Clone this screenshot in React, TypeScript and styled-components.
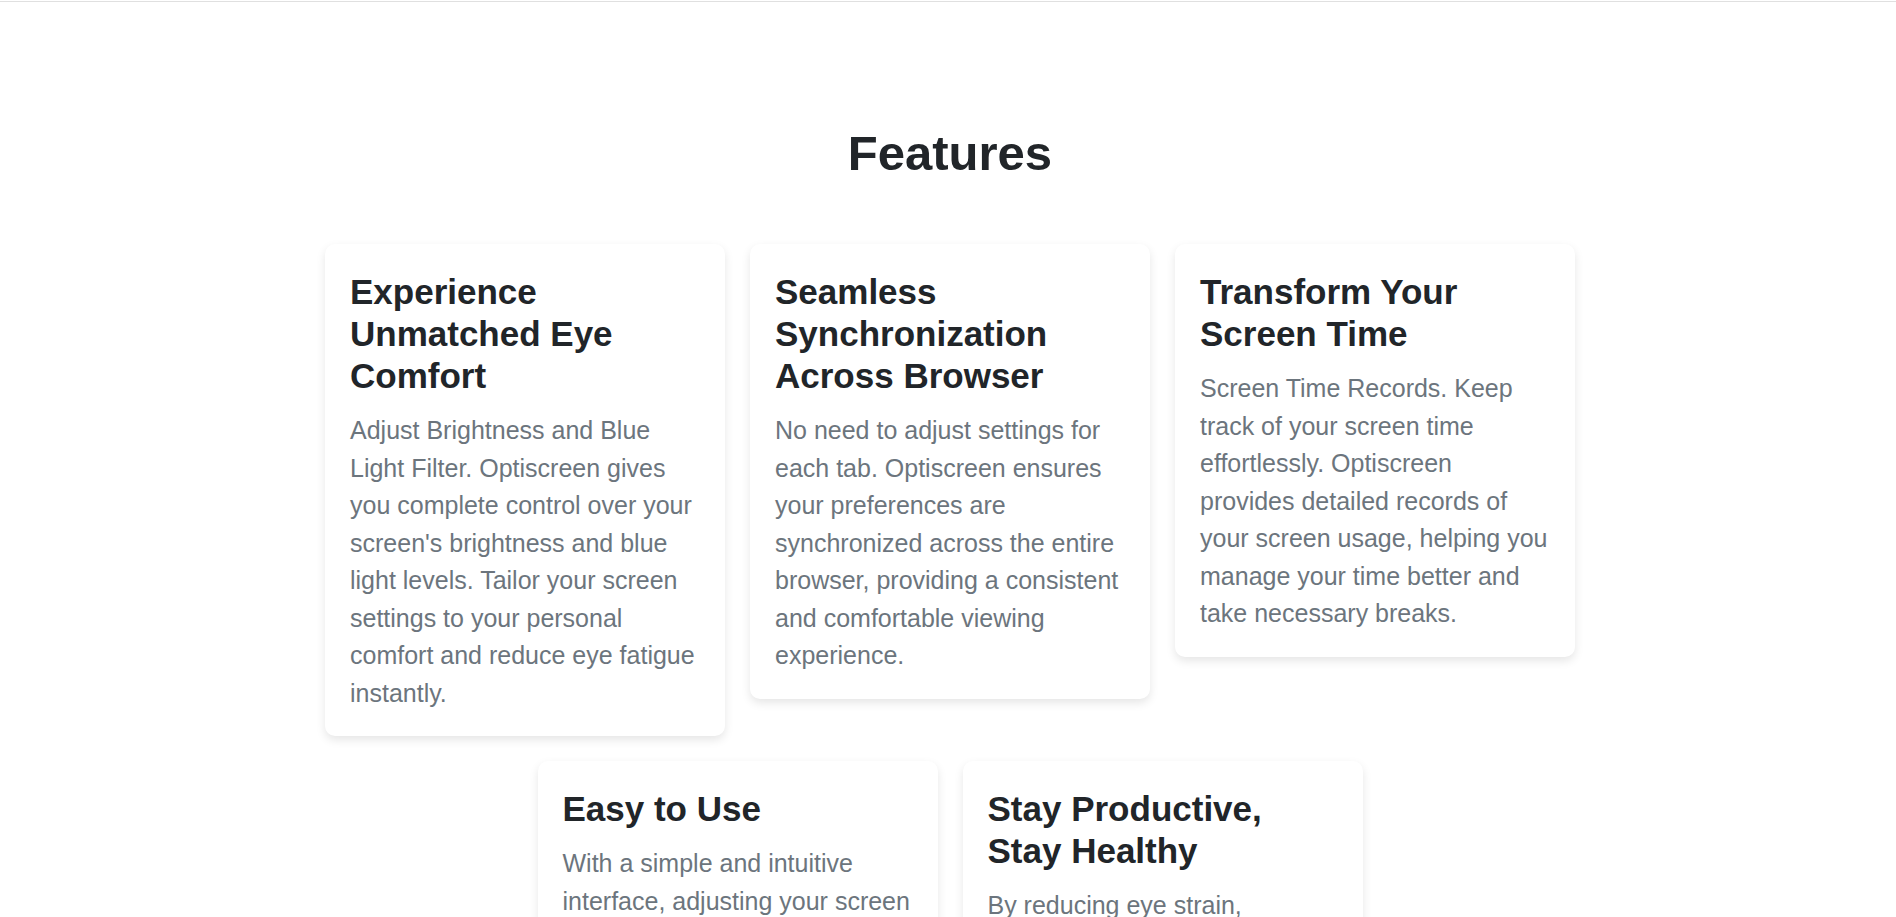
import React from 'react';
import styled, { createGlobalStyle } from 'styled-components';

const GlobalStyle = createGlobalStyle`
  html, body {
    margin: 0;
    padding: 0;
    background: #ffffff;
  }
  body {
    font-family: "Liberation Sans", Arial, Helvetica, sans-serif;
    color: #212529;
  }
  * {
    box-sizing: border-box;
  }
`;

const TopRule = styled.div`
  height: 2px;
  border-bottom: 1px solid #e0e0e0;
`;

const FeaturesSection = styled.section`
  padding: 122px 0 60px 4px;
  display: flex;
  flex-direction: column;
  align-items: center;
`;

const SectionTitle = styled.h2`
  margin: 0 0 62px;
  font-size: 49px;
  line-height: 58px;
  font-weight: 700;
  color: #212529;
  text-align: center;
`;

const CardGrid = styled.div`
  width: 1250px;
  display: flex;
  flex-wrap: wrap;
  justify-content: center;
  align-items: flex-start;
  gap: 25px;
`;

const Card = styled.div`
  width: 400px;
  padding: 27px 25px 24px;
  background: #ffffff;
  border-radius: 10px;
  box-shadow: 0 4px 10px rgba(0, 0, 0, 0.1);
`;

const CardTitle = styled.h3`
  margin: 0 0 15px;
  font-size: 35px;
  line-height: 42px;
  font-weight: 700;
  color: #212529;
`;

const CardText = styled.p`
  margin: 0;
  font-size: 25px;
  line-height: 37.5px;
  color: #6c757d;
`;

const features = [
  {
    title: 'Experience Unmatched Eye Comfort',
    text: "Adjust Brightness and Blue Light Filter. Optiscreen gives you complete control over your screen's brightness and blue light levels. Tailor your screen settings to your personal comfort and reduce eye fatigue instantly.",
  },
  {
    title: 'Seamless Synchronization Across Browser',
    text: 'No need to adjust settings for each tab. Optiscreen ensures your preferences are synchronized across the entire browser, providing a consistent and comfortable viewing experience.',
  },
  {
    title: 'Transform Your Screen Time',
    text: 'Screen Time Records. Keep track of your screen time effortlessly. Optiscreen provides detailed records of your screen usage, helping you manage your time better and take necessary breaks.',
  },
  {
    title: 'Easy to Use',
    text: 'With a simple and intuitive interface, adjusting your screen settings has never been easier. Get started in seconds and enjoy a better viewing experience.',
  },
  {
    title: 'Stay Productive, Stay Healthy',
    text: 'By reducing eye strain, Optiscreen helps you stay focused and productive for longer, while protecting your eyes and your sleep.',
  },
];

const App: React.FC = () => {
  return (
    <>
      <GlobalStyle />
      <TopRule />
      <FeaturesSection>
        <SectionTitle>Features</SectionTitle>
        <CardGrid>
          {features.map(feature => (
            <Card key={feature.title}>
              <CardTitle>{feature.title}</CardTitle>
              <CardText>{feature.text}</CardText>
            </Card>
          ))}
        </CardGrid>
      </FeaturesSection>
    </>
  );
};

export default App;
